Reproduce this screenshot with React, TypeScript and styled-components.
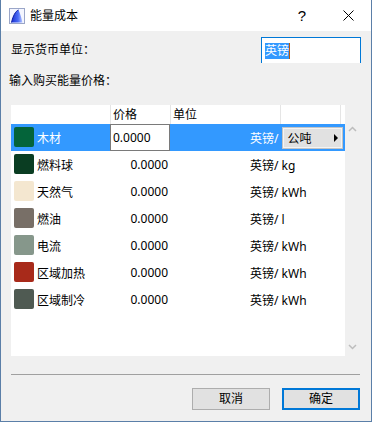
import React from 'react';
import styled, { createGlobalStyle } from 'styled-components';

const GlobalStyle = createGlobalStyle`
  html, body {
    margin: 0;
    padding: 0;
    background: #ffffff;
  }
  body {
    font-family: 'Noto Sans', 'Noto Sans CJK SC', sans-serif;
    font-size: 12px;
    color: #000;
  }
  * {
    box-sizing: border-box;
  }
`;

const Window = styled.div`
  width: 372px;
  height: 422px;
  display: flex;
  flex-direction: column;
  background: #f0f0f0;
  border: 1px solid #5b7fa8;
  border-top: none;
`;

const TitleBar = styled.div`
  height: 31px;
  display: flex;
  align-items: center;
  background: #ffffff;
  padding-left: 8px;
`;

const Title = styled.span`
  margin-left: 5px;
  font-size: 12px;
  line-height: 16px;
  flex: 1;
`;

const TitleButton = styled.div`
  width: 46px;
  height: 31px;
  display: flex;
  align-items: center;
  justify-content: center;
  font-family: 'Liberation Sans', sans-serif;
  font-size: 15px;
`;

const Body = styled.div`
  flex: 1;
  display: flex;
  flex-direction: column;
  padding: 6px 10px 0 10px;
`;

const CurrencyRow = styled.div`
  display: flex;
  align-items: center;
  justify-content: space-between;
  height: 26px;
`;

const Label = styled.span<{ shift?: number }>`
  line-height: 16px;
  margin-left: ${({ shift }) => shift ?? 0}px;
`;

const CurrencyInput = styled.div`
  width: 100px;
  height: 26px;
  background: #fff;
  border: 1px solid #0078d7;
  border-bottom: none;
  padding: 5px 0 0 3px;
  display: flex;
  align-items: flex-start;
`;

const Selected = styled.span`
  background: #3399ff;
  color: #fff;
  line-height: 16px;
`;

const Caret = styled.span`
  width: 1px;
  height: 16px;
  background: #b55a12;
`;

const SectionLabel = styled(Label)`
  margin-top: 10px;
`;

const TableArea = styled.div`
  margin-top: 16px;
  height: 251px;
  display: flex;
`;

const Table = styled.div`
  width: 334px;
  background: #fff;
`;

const cols = '99px 60px 110px 60px 1fr';

const HeaderRow = styled.div`
  display: grid;
  grid-template-columns: ${cols};
  height: 19px;
`;

const HeaderCell = styled.div<{ sep?: boolean }>`
  border-left: ${({ sep }) => (sep ? '1px solid #e5e5e5' : 'none')};
  padding-left: 2px;
  line-height: 19px;
`;

const Row = styled.div<{ active?: boolean }>`
  display: grid;
  grid-template-columns: 99px 60px 1fr;
  height: 27px;
  align-items: center;
  background: ${({ active }) => (active ? '#3399ff' : 'transparent')};
  color: ${({ active }) => (active ? '#fff' : '#000')};
`;

const NameCell = styled.div`
  display: flex;
  align-items: center;
  padding-left: 3px;
  gap: 3px;
`;

const Swatch = styled.span<{ color: string }>`
  width: 20px;
  height: 20px;
  border-radius: 2px;
  background: ${({ color }) => color};
  margin-top: -1px;
`;

const PriceCell = styled.div`
  text-align: right;
  padding-right: 2px;
  line-height: 16px;
`;

const PriceInput = styled.div`
  height: 27px;
  background: #fff;
  color: #000;
  border: 1px solid #7a7a7a;
  padding-left: 2px;
  line-height: 25px;
`;

const UnitCell = styled.div`
  display: flex;
  align-items: center;
  padding-left: 80px;
  white-space: nowrap;
`;

const Dropdown = styled.div`
  margin-left: 4px;
  width: 61px;
  height: 22px;
  background: #e1e1e1;
  border: 1px solid #c4c4c4;
  box-shadow: inset 0 0 0 1px #f4f4f4;
  color: #000;
  display: flex;
  align-items: center;
  justify-content: space-between;
  padding: 0 4px 0 4px;
`;

const DropArrow = styled.span`
  width: 0;
  height: 0;
  border-top: 4px solid transparent;
  border-bottom: 4px solid transparent;
  border-left: 4px solid #000;
`;

const ScrollBar = styled.div`
  width: 14px;
  display: flex;
  flex-direction: column;
  justify-content: space-between;
  align-items: center;
  padding: 21px 0 6px 0;
`;

const Divider = styled.div`
  margin: 18px 11px 0 10px;
  height: 1px;
  background: #a0a0a0;
`;

const ButtonRow = styled.div`
  display: flex;
  justify-content: flex-end;
  gap: 12px;
  padding: 13px 11px 11px 0;
`;

const Button = styled.div<{ primary?: boolean }>`
  width: 78px;
  height: 22px;
  background: #e1e1e1;
  border: ${({ primary }) => (primary ? '2px solid #0078d7' : '1px solid #adadad')};
  display: flex;
  align-items: center;
  justify-content: center;
  line-height: 16px;
`;

const AppIcon = () => (
  <svg width="16" height="16" viewBox="0 0 16 16">
    <defs>
      <linearGradient id="ic" x1="0" y1="0" x2="1" y2="0">
        <stop offset="0" stopColor="#1a2fd0" />
        <stop offset="0.6" stopColor="#4a6cf5" />
        <stop offset="1" stopColor="#b8c8ff" />
      </linearGradient>
    </defs>
    <rect x="0.5" y="0.5" width="15" height="15" fill="#f4f6ff" stroke="#9aa6c8" />
    <path d="M2.5 14.5 C4 8 6.5 3 9.5 2 C11 5 12.5 10 13.5 14.5 Z" fill="url(#ic)" />
    <path d="M2.5 14.5 C4 8 6.5 3 9.5 2" fill="none" stroke="#0a1aa0" strokeWidth="1" />
  </svg>
);

const CloseIcon = () => (
  <svg width="11" height="11" viewBox="0 0 11 11">
    <path d="M0.5 0.5 L10.5 10.5 M10.5 0.5 L0.5 10.5" stroke="#000" strokeWidth="1" />
  </svg>
);

const Chevron = ({ up }: { up?: boolean }) => (
  <svg width="9" height="6" viewBox="0 0 9 6">
    <path
      d={up ? 'M1 5 L4.5 1.5 L8 5' : 'M1 1 L4.5 4.5 L8 1'}
      fill="none"
      stroke="#bdbdbd"
      strokeWidth="1.5"
    />
  </svg>
);

const items = [
  { name: '木材', color: '#04643a', unit: '公吨' },
  { name: '燃料球', color: '#0a3d22', unit: 'kg' },
  { name: '天然气', color: '#f4e7d0', unit: 'kWh' },
  { name: '燃油', color: '#786f67', unit: 'l' },
  { name: '电流', color: '#86978b', unit: 'kWh' },
  { name: '区域加热', color: '#a82a1a', unit: 'kWh' },
  { name: '区域制冷', color: '#4f5a52', unit: 'kWh' },
];

const App = () => {
  return (
    <>
      <GlobalStyle />
      <Window>
        <TitleBar>
          <AppIcon />
          <Title>能量成本</Title>
          <TitleButton>?</TitleButton>
          <TitleButton>
            <CloseIcon />
          </TitleButton>
        </TitleBar>

        <Body>
          <CurrencyRow>
            <Label>显示货币单位：</Label>
            <CurrencyInput>
              <Selected>英镑</Selected>
              <Caret />
            </CurrencyInput>
          </CurrencyRow>

          <SectionLabel shift={-2}>输入购买能量价格：</SectionLabel>

          <TableArea>
            <Table>
              <HeaderRow>
                <HeaderCell />
                <HeaderCell sep>价格</HeaderCell>
                <HeaderCell sep>单位</HeaderCell>
                <HeaderCell sep />
                <HeaderCell sep />
              </HeaderRow>
              {items.map((it, i) => {
                const active = i === 0;
                return (
                  <Row key={it.name} active={active}>
                    <NameCell>
                      <Swatch color={it.color} />
                      <span>{it.name}</span>
                    </NameCell>
                    {active ? (
                      <PriceInput>0.0000</PriceInput>
                    ) : (
                      <PriceCell>0.0000</PriceCell>
                    )}
                    <UnitCell>
                      {active ? (
                        <>
                          <span>英镑/</span>
                          <Dropdown>
                            <span>{it.unit}</span>
                            <DropArrow />
                          </Dropdown>
                        </>
                      ) : (
                        <span>英镑/ {it.unit}</span>
                      )}
                    </UnitCell>
                  </Row>
                );
              })}
            </Table>
            <ScrollBar>
              <Chevron up />
              <Chevron />
            </ScrollBar>
          </TableArea>
        </Body>

        <Divider />
        <ButtonRow>
          <Button>取消</Button>
          <Button primary>确定</Button>
        </ButtonRow>
      </Window>
    </>
  );
};

export default App;
